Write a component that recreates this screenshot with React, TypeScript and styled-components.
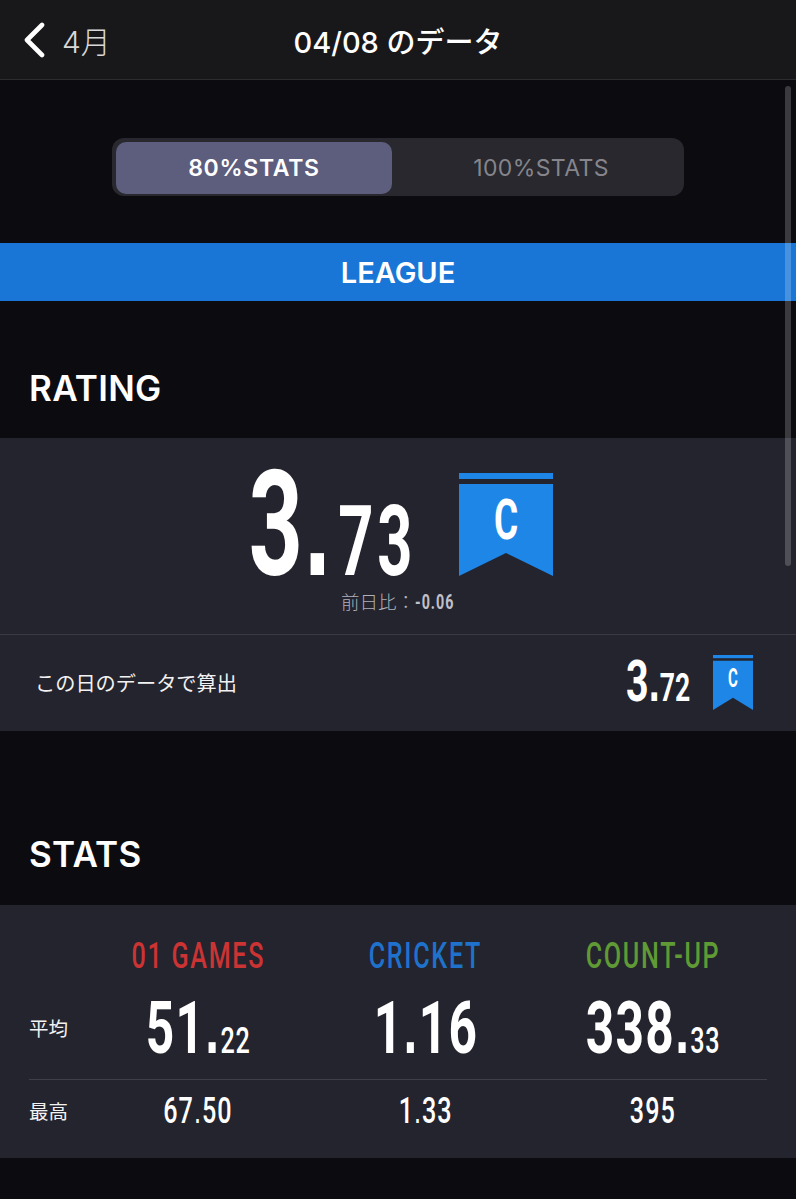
import styled, { createGlobalStyle } from "styled-components";

const GlobalStyle = createGlobalStyle`
  html, body {
    margin: 0;
    padding: 0;
    background: #0b0b10;
    overflow: hidden;
  }
  * {
    box-sizing: border-box;
  }
`;

const CJK = `"Noto Sans CJK JP", sans-serif`;
const UI = `Inter, "Noto Sans CJK JP", sans-serif`;

function Ribbon({ size }: { size: "large" | "small" }) {
  return (
    <RibbonBox $size={size}>
      <svg viewBox="0 0 94 103" width="100%" height="100%" preserveAspectRatio="none">
        <rect x="0" y="0" width="94" height="6" fill="#1e86e6" />
        <path d="M0 11H94V103L47 80L0 103Z" fill="#1e86e6" />
      </svg>
      <RibbonLetter $size={size}>C</RibbonLetter>
    </RibbonBox>
  );
}

// the dot of the reference's number font is square, Roboto's is not
function Digits({ text }: { text: string }) {
  const [left, right] = text.split(".");
  if (right === undefined) return <>{text}</>;
  return (
    <>
      {left}
      <Dot>.</Dot>
      {right}
    </>
  );
}

function StatColumnValue({ whole, fraction }: { whole: string; fraction?: string }) {
  return (
    <MainValue>
      <Squeeze>
        <MainWhole>
          <Digits text={whole} />
        </MainWhole>
        {fraction && <MainFraction>{fraction}</MainFraction>}
      </Squeeze>
    </MainValue>
  );
}

function App() {
  return (
    <Page>
      <GlobalStyle />
      <Header>
        <BackLink>
          <svg width="24" height="36" viewBox="0 0 24 36" fill="none">
            <path d="M20 3L5 18L20 33" stroke="#fff" strokeWidth="4.6" strokeLinecap="round" strokeLinejoin="round" />
          </svg>
          <BackLabel>4月</BackLabel>
        </BackLink>
        <Title>04/08 のデータ</Title>
      </Header>

      <Scrollbar />

      <Toggle>
        <ToggleTrack>
          <ToggleItem $active>80%STATS</ToggleItem>
          <ToggleItem>100%STATS</ToggleItem>
        </ToggleTrack>
      </Toggle>

      <LeagueBar>LEAGUE</LeagueBar>

      <SectionTitle>RATING</SectionTitle>
      <RatingPanel>
        <RatingTop>
          <RatingRow>
            <RatingNumber>
              <Squeeze>
                <RatingWhole>
                  <Digits text="3." />
                </RatingWhole>
                <RatingFraction>73</RatingFraction>
              </Squeeze>
            </RatingNumber>
            <Ribbon size="large" />
          </RatingRow>
          <Compare>
            前日比：<CompareValue>-0.06</CompareValue>
          </Compare>
        </RatingTop>
        <RatingBottom>
          <DayLabel>この日のデータで算出</DayLabel>
          <DayResult>
            <DayNumber>
              <Squeeze>
                <DayWhole>
                  <Digits text="3." />
                </DayWhole>
                <DayFraction>72</DayFraction>
              </Squeeze>
            </DayNumber>
            <Ribbon size="small" />
          </DayResult>
        </RatingBottom>
      </RatingPanel>

      <StatsTitle>STATS</StatsTitle>
      <StatsPanel>
        <StatsHead>
          <span />
          <GameName $color="#cc3333">
            <Squeeze>01 GAMES</Squeeze>
          </GameName>
          <GameName $color="#1f72cc">
            <Squeeze>CRICKET</Squeeze>
          </GameName>
          <GameName $color="#5f9a35">
            <Squeeze>COUNT-UP</Squeeze>
          </GameName>
        </StatsHead>
        <AverageRow>
          <RowLabel $lift={13}>平均</RowLabel>
          <StatColumnValue whole="51." fraction="22" />
          <StatColumnValue whole="1.16" />
          <StatColumnValue whole="338." fraction="33" />
        </AverageRow>
        <BestRow>
          <RowLabel $lift={5}>最高</RowLabel>
          {["67.50", "1.33", "395"].map((value) => (
            <BestValue key={value}>
              <Squeeze>
                <Digits text={value} />
              </Squeeze>
            </BestValue>
          ))}
        </BestRow>
      </StatsPanel>
    </Page>
  );
}

const Page = styled.div`
  position: relative;
  width: 796px;
  height: 1199px;
  overflow: hidden;
  background: #0b0b10;
  color: #fff;
  font-family: ${UI};
`;

const Header = styled.header`
  display: grid;
  grid-template-columns: 1fr auto 1fr;
  align-items: center;
  height: 80px;
  padding-left: 22px;
  background: #18181b;
  border-bottom: 1px solid #2c2c30;
`;

const BackLink = styled.div`
  display: flex;
  align-items: center;
  gap: 16px;
`;

const BackLabel = styled.span`
  font-size: 30px;
  font-weight: 300;
  color: #d8d8d8;
`;

const Title = styled.h1`
  margin: 0 0 0 -22px;
  font-size: 29px;
  font-weight: 500;
  white-space: nowrap;
`;

const Scrollbar = styled.div`
  position: absolute;
  top: 86px;
  right: 5px;
  width: 6px;
  height: 480px;
  border-radius: 3px;
  background: rgba(255, 255, 255, 0.2);
  z-index: 2;
`;

const Toggle = styled.div`
  display: flex;
  justify-content: center;
  padding-top: 58px;
`;

const ToggleTrack = styled.div`
  display: flex;
  width: 572px;
  height: 58px;
  padding: 4px 0 2px 4px;
  border-radius: 12px;
  background: #28282e;
`;

const ToggleItem = styled.div<{ $active?: boolean }>`
  display: flex;
  flex: ${(p) => (p.$active ? "0 0 276px" : "1")};
  align-items: center;
  justify-content: center;
  padding-left: ${(p) => (p.$active ? 0 : 6)}px;
  border-radius: 10px;
  font-size: 23px;
  font-weight: ${(p) => (p.$active ? 600 : 400)};
  letter-spacing: ${(p) => (p.$active ? 0.7 : 0.4)}px;
  background: ${(p) => (p.$active ? "#5d5d7d" : "transparent")};
  color: ${(p) => (p.$active ? "#fff" : "#85858b")};
`;

const LeagueBar = styled.div`
  display: flex;
  align-items: center;
  justify-content: center;
  height: 58px;
  margin-top: 47px;
  background: #1976d6;
  font-size: 29px;
  font-weight: 600;
`;

const SectionTitle = styled.h2`
  height: 137px;
  margin: 0;
  padding: 65px 0 0 29px;
  font-size: 35px;
  font-weight: 600;
  letter-spacing: 0.3px;
  line-height: 44px;
`;

const StatsTitle = styled(SectionTitle)`
  height: 174px;
  padding-top: 101px;
`;

const Squeeze = styled.span`
  display: inline-block;
  white-space: nowrap;
  font-family: Roboto, sans-serif;
  transform: scaleX(0.68);
  transform-origin: center;
`;

const Dot = styled.span`
  font-family: "Liberation Sans", sans-serif;
`;

const RatingPanel = styled.section`
  background: #24242e;
`;

const RatingTop = styled.div`
  height: 197px;
  padding-top: 35px;
  border-bottom: 1px solid #3a3a45;
`;

const RatingRow = styled.div`
  display: flex;
  justify-content: center;
  align-items: flex-start;
  gap: 47px;
  padding-left: 6px;
`;

const RatingNumber = styled.div`
  display: flex;
  justify-content: center;
  width: 162px;
  height: 104px;
  font-weight: 700;
  white-space: nowrap;
`;

const RatingWhole = styled.span`
  display: inline-block;
  font-size: 146px;
  line-height: 104px;
  letter-spacing: 2px;
  transform: scaleX(0.95);
  transform-origin: right;
`;

const RatingFraction = styled.span`
  display: inline-block;
  font-size: 98px;
  line-height: 104px;
  letter-spacing: 6px;
  transform: scaleX(0.92);
  transform-origin: right;
`;

const RibbonBox = styled.div<{ $size: "large" | "small" }>`
  position: relative;
  width: ${(p) => (p.$size === "large" ? 94 : 40)}px;
  height: ${(p) => (p.$size === "large" ? 103 : 55)}px;
  margin-top: ${(p) => (p.$size === "large" ? 0 : -1)}px;
  svg {
    display: block;
  }
`;

const RibbonLetter = styled.span<{ $size: "large" | "small" }>`
  position: absolute;
  left: 0;
  right: 0;
  top: ${(p) => (p.$size === "large" ? 17 : 9)}px;
  text-align: center;
  font-family: Roboto, sans-serif;
  font-weight: 700;
  font-size: ${(p) => (p.$size === "large" ? 56 : 25)}px;
  line-height: ${(p) => (p.$size === "large" ? 60 : 30)}px;
  color: #fff;
  transform: scaleX(${(p) => (p.$size === "large" ? 0.66 : 0.6)});
`;

const Compare = styled.div`
  margin-top: 11px;
  padding-right: 2px;
  text-align: center;
  font-family: ${CJK};
  font-size: 18.5px;
  line-height: 26px;
  font-weight: 300;
  color: #b0b0ba;
`;

const CompareValue = styled.span`
  display: inline-block;
  width: 38px;
  font-family: Roboto, sans-serif;
  font-size: 21px;
  font-weight: 700;
  letter-spacing: 1.5px;
  color: #c0c0ca;
  transform: scaleX(0.68);
  transform-origin: left;
  white-space: nowrap;
`;

const RatingBottom = styled.div`
  display: flex;
  align-items: center;
  justify-content: space-between;
  height: 96px;
  padding: 0 43px 0 35px;
`;

const DayLabel = styled.span`
  margin-bottom: 2px;
  font-family: ${CJK};
  font-size: 20.2px;
  font-weight: 400;
  color: #f2f2f2;
`;

const DayResult = styled.div`
  display: flex;
  align-items: center;
  gap: 23px;
`;

const DayNumber = styled.div`
  display: flex;
  justify-content: center;
  width: 64px;
  margin-top: 2px;
  font-weight: 700;
  white-space: nowrap;
`;

const DayWhole = styled.span`
  font-size: 58px;
  line-height: 44px;
`;

const DayFraction = styled.span`
  font-size: 39px;
  line-height: 44px;
`;

const StatsPanel = styled.section`
  height: 253px;
  padding: 0 29px;
  background: #24242e;
`;

const columns = `grid-template-columns: 55px repeat(3, 1fr);`;

const StatsHead = styled.div`
  display: grid;
  ${columns}
  align-items: center;
  height: 84px;
  padding-top: 16px;
`;

const GameName = styled.div<{ $color: string }>`
  text-align: center;
  white-space: nowrap;
  color: ${(p) => p.$color};
  font-size: 37px;
  font-weight: 500;
  letter-spacing: 2.5px;
  line-height: 44px;
`;

const AverageRow = styled.div`
  display: grid;
  ${columns}
  align-items: center;
  height: 91px;
  padding-bottom: 16px;
  border-bottom: 1px solid #3f3f4a;
`;

const BestRow = styled.div`
  display: grid;
  ${columns}
  align-items: center;
  height: 65px;
`;

const RowLabel = styled.span<{ $lift: number }>`
  padding-bottom: ${(p) => p.$lift}px;
  font-family: ${CJK};
  font-size: 19.5px;
  color: #f2f2f2;
`;

const MainValue = styled.div`
  align-self: start;
  padding-top: 9px;
  text-align: center;
  white-space: nowrap;
  font-weight: 700;
  line-height: 60px;
`;

const MainWhole = styled.span`
  font-size: 73px;
  letter-spacing: 2px;
`;

const MainFraction = styled.span`
  font-size: 37px;
  font-weight: 500;
  letter-spacing: 1px;
`;

const BestValue = styled.div`
  padding-bottom: 4px;
  text-align: center;
  white-space: nowrap;
  font-size: 37px;
  font-weight: 500;
  letter-spacing: 1.5px;
  line-height: 44px;
`;

export default App;
